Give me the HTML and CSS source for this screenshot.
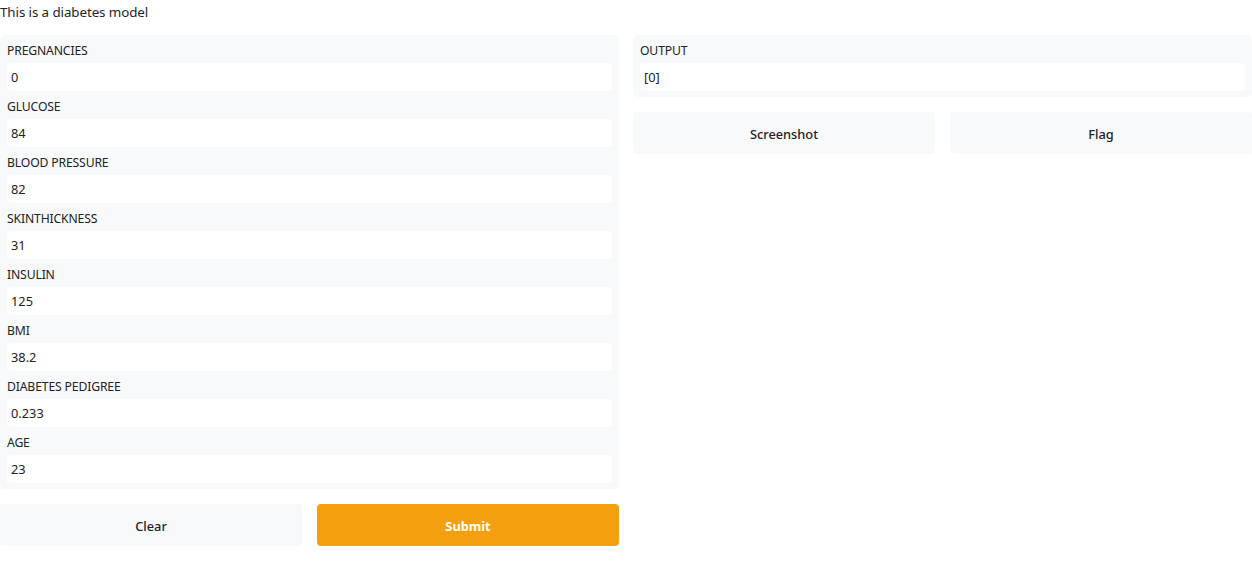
FILE: index.html
```html
<!DOCTYPE html>
<html>
<head>
<meta charset="utf-8">
<link rel="stylesheet" href="styles.css">
</head>
<body>
<div class="desc">This is a diabetes model</div>
<div class="layout">
  <div class="col">
    <div class="panel">
      <div class="field"><div class="label">PREGNANCIES</div><div class="box">0</div></div>
      <div class="field"><div class="label">GLUCOSE</div><div class="box">84</div></div>
      <div class="field"><div class="label">BLOOD PRESSURE</div><div class="box">82</div></div>
      <div class="field"><div class="label">SKINTHICKNESS</div><div class="box">31</div></div>
      <div class="field"><div class="label">INSULIN</div><div class="box">125</div></div>
      <div class="field"><div class="label">BMI</div><div class="box">38.2</div></div>
      <div class="field"><div class="label">DIABETES PEDIGREE</div><div class="box">0.233</div></div>
      <div class="field"><div class="label">AGE</div><div class="box">23</div></div>
    </div>
    <div class="buttons">
      <div class="btn">Clear</div>
      <div class="btn primary">Submit</div>
    </div>
  </div>
  <div class="col">
    <div class="panel">
      <div class="field"><div class="label">OUTPUT</div><div class="box">[0]</div></div>
    </div>
    <div class="buttons">
      <div class="btn">Screenshot</div>
      <div class="btn">Flag</div>
    </div>
  </div>
</div>
</body>
</html>
```
FILE: styles.css
```css
html, body {
  margin: 0;
  padding: 0;
  background: #fff;
  font-family: "Noto Sans", "Open Sans", sans-serif;
  color: #1f2328;
}
.desc {
  font-size: 13.4px;
  height: 24px;
  line-height: 24px;
  margin-bottom: 11px;
  letter-spacing: -0.1px;
}
.layout {
  display: grid;
  grid-template-columns: 619px 619px;
  column-gap: 14px;
  align-items: start;
}
.col {
  display: flex;
  flex-direction: column;
  gap: 15px;
}
.panel {
  background: #f8f9fb;
  border-radius: 5px;
  padding: 7px 7px 6px 7px;
  display: flex;
  flex-direction: column;
}
.field {
  display: flex;
  flex-direction: column;
}
.label {
  font-size: 12.2px;
  height: 21px;
  line-height: 17px;
  letter-spacing: -0.15px;
  color: #222;
}
.box {
  background: #fff;
  border-radius: 4px;
  height: 28px;
  line-height: 28px;
  padding-left: 4px;
  font-size: 12.8px;
  color: #222;
  margin-bottom: 7px;
}
.field:last-child .box {
  margin-bottom: 0;
}
.buttons {
  display: grid;
  grid-template-columns: 1fr 1fr;
  column-gap: 15px;
}
.btn {
  background: #f8f9fb;
  border-radius: 4px;
  height: 42px;
  box-sizing: border-box;
  padding-top: 2px;
  display: flex;
  align-items: center;
  justify-content: center;
  font-size: 12.8px;
  font-weight: 500;
  color: #222;
}
.btn.primary {
  background: #f4a00e;
  color: #fff;
  font-weight: 700;
}
```
